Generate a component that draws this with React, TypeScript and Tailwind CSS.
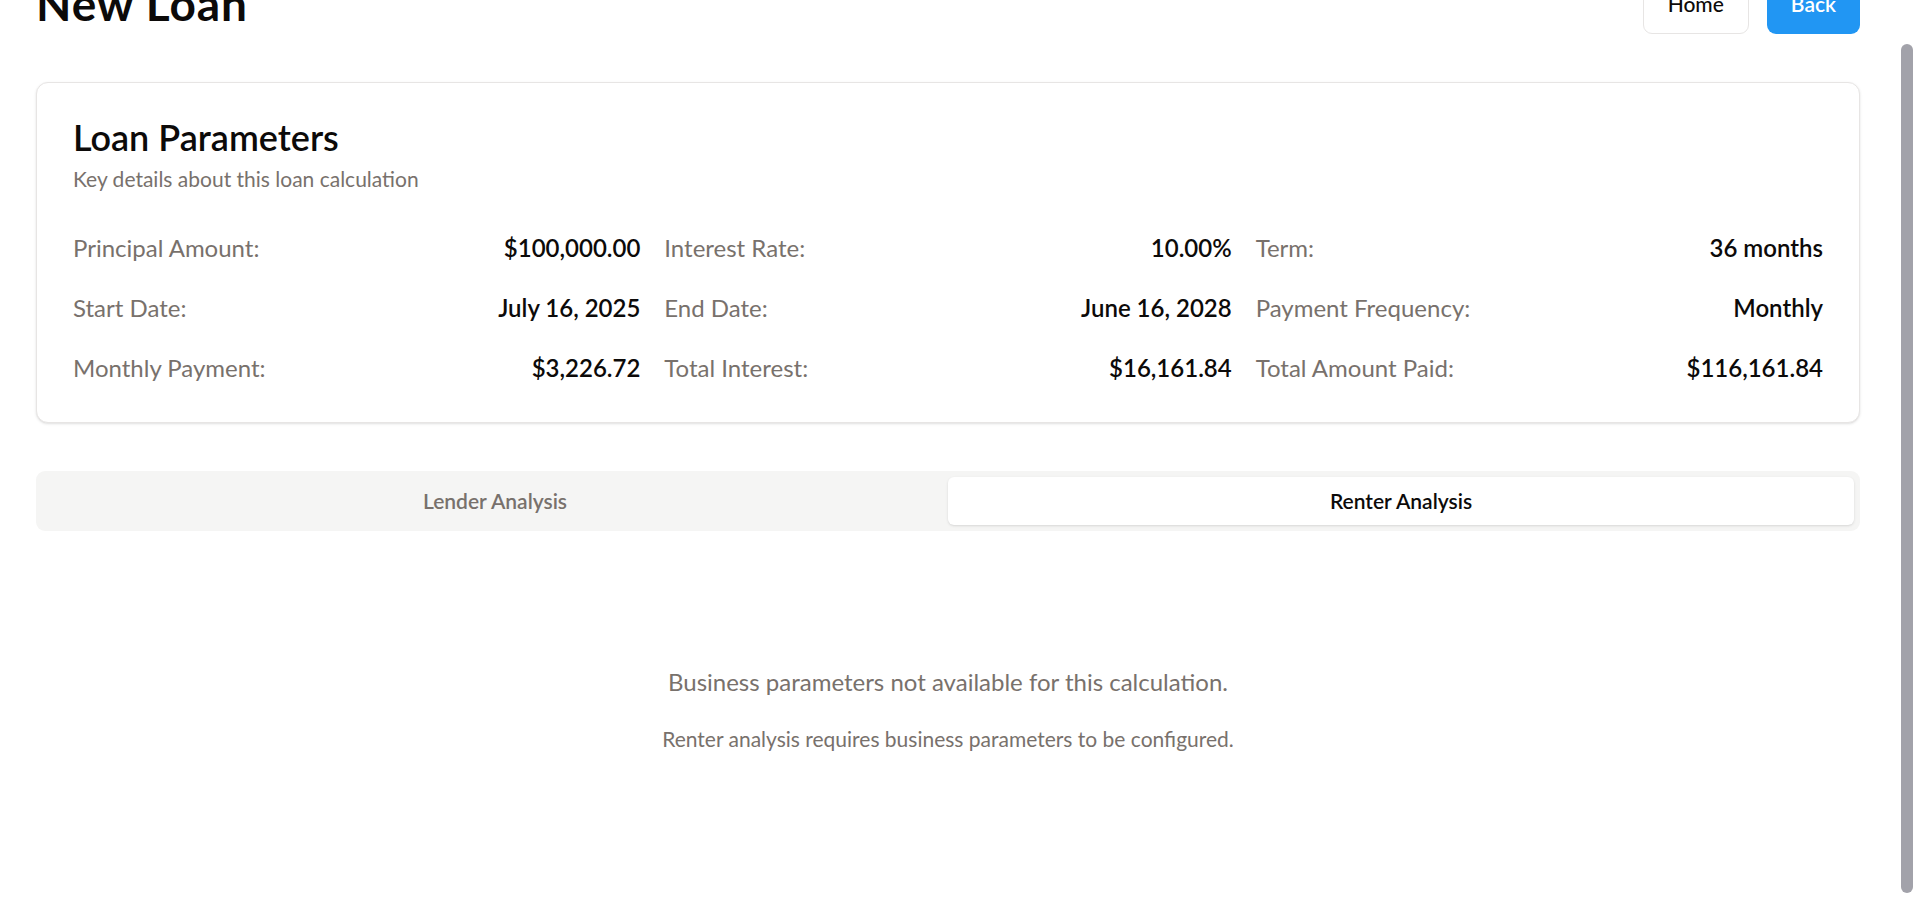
const params = [
  { label: "Principal Amount:", value: "$100,000.00" },
  { label: "Interest Rate:", value: "10.00%" },
  { label: "Term:", value: "36 months" },
  { label: "Start Date:", value: "July 16, 2025" },
  { label: "End Date:", value: "June 16, 2028" },
  { label: "Payment Frequency:", value: "Monthly" },
  { label: "Monthly Payment:", value: "$3,226.72" },
  { label: "Total Interest:", value: "$16,161.84" },
  { label: "Total Amount Paid:", value: "$116,161.84" },
]

export default function App() {
  return (
    <div
      className="flex h-screen overflow-hidden bg-white text-[#0c0a09]"
      style={{ fontFamily: '"Segoe UI", Lato, "Noto Sans", sans-serif' }}
    >
      {/* page, shown scrolled down a little */}
      <div className="flex-1 min-w-0 px-[36px]">
        <div className="-mt-[26px]">
          {/* Header */}
          <div className="flex items-center justify-between mb-[48px] h-[60px]">
            <h1 className="text-[46px] leading-[54px] font-bold tracking-[0.02em]">New Loan</h1>
            <div className="flex gap-[18px]">
              <button className="h-[60px] px-[24px] rounded-[9px] border border-[#e7e5e4] bg-white text-[21px] font-medium">
                Home
              </button>
              <button className="h-[60px] px-[24px] rounded-[9px] bg-[#2196f3] text-white text-[21px] font-semibold">
                Back
              </button>
            </div>
          </div>

          {/* Loan Parameters card */}
          <div className="rounded-[12px] border border-[#e7e5e4] bg-white shadow-sm">
            <div className="flex flex-col gap-[9px] p-[36px]">
              <h2 className="text-[36px] leading-none font-semibold">Loan Parameters</h2>
              <p className="text-[21px] leading-[30px] text-[#78716c]">Key details about this loan calculation</p>
            </div>
            <div className="grid grid-cols-3 gap-x-[24px] gap-y-[24px] px-[36px] pb-[36px]">
              {params.map((p) => (
                <div key={p.label} className="flex justify-between text-[24px] leading-[36px]">
                  <span className="text-[#78716c]">{p.label}</span>
                  <span className="font-semibold">{p.value}</span>
                </div>
              ))}
            </div>
          </div>

          {/* Tabs */}
          <div className="mt-[48px]">
            <div className="grid grid-cols-2 h-[60px] p-[6px] rounded-[9px] bg-[#f5f5f4]">
              <button className="rounded-[6px] text-[21px] font-semibold text-[#78716c]">Lender Analysis</button>
              <button className="rounded-[6px] bg-white shadow-sm text-[21px] font-semibold text-[#0c0a09]">
                Renter Analysis
              </button>
            </div>

            <div className="mt-[12px] pt-[121px] text-center">
              <p className="text-[24px] leading-[36px] text-[#78716c]">
                Business parameters not available for this calculation.
              </p>
              <p className="mt-[24px] text-[21px] leading-[30px] text-[#78716c]">
                Renter analysis requires business parameters to be configured.
              </p>
            </div>
          </div>
        </div>
      </div>

      {/* scrollbar */}
      <div className="w-[22px] shrink-0 flex justify-center bg-white">
        <div className="mt-[44px] mb-[11px] w-[12px] rounded-full bg-[#a2a2aa]" />
      </div>
    </div>
  )
}
